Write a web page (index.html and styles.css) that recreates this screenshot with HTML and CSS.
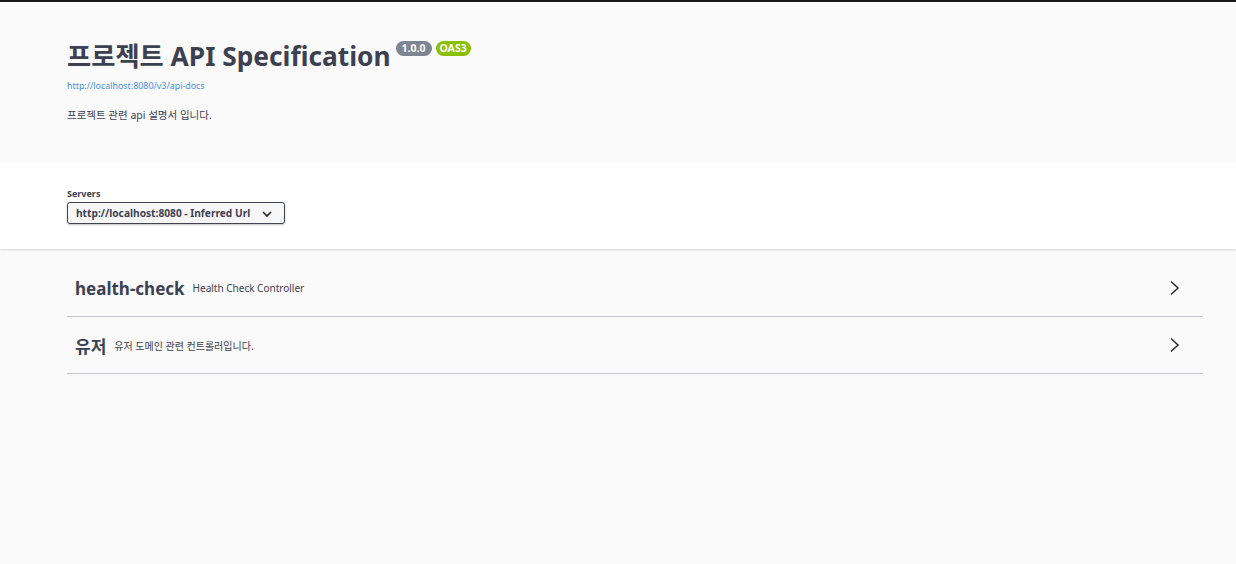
FILE: index.html
```html
<!DOCTYPE html>
<html lang="ko">
<head>
<meta charset="utf-8">
<title>Swagger UI</title>
<link rel="stylesheet" href="styles.css">
</head>
<body>
<div class="topline"></div>
<section class="info">
  <div class="wrap">
    <h2 class="title">프로젝트 API Specification<span class="badges"><span class="badge version">1.0.0</span><span class="badge oas">OAS3</span></span></h2>
    <a class="url" href="#">http://localhost:8080/v3/api-docs</a>
    <p class="desc">프로젝트 관련 api 설명서 입니다.</p>
  </div>
</section>
<section class="schemes">
  <div class="wrap">
    <div class="servers-label">Servers</div>
    <div class="select">
      <span>http://localhost:8080 - Inferred Url</span>
      <svg class="caret" width="10" height="6" viewBox="0 0 10 6"><path d="M1 1 L5 5 L9 1" fill="none" stroke="#222" stroke-width="1.6"/></svg>
    </div>
  </div>
</section>
<section class="tags">
  <div class="wrap">
    <div class="tag">
      <div class="tag-left"><span class="tag-name">health-check</span><span class="tag-desc">Health Check Controller</span></div>
      <svg class="arrow" width="12" height="16" viewBox="0 0 12 16"><path d="M2 1.5 L9 8 L2 14.5" fill="none" stroke="#333" stroke-width="1.6"/></svg>
    </div>
    <div class="tag">
      <div class="tag-left"><span class="tag-name">유저</span><span class="tag-desc">유저 도메인 관련 컨트롤러입니다.</span></div>
      <svg class="arrow" width="12" height="16" viewBox="0 0 12 16"><path d="M2 1.5 L9 8 L2 14.5" fill="none" stroke="#333" stroke-width="1.6"/></svg>
    </div>
  </div>
</section>
</body>
</html>
```
FILE: styles.css
```css
html, body {
  margin: 0;
  padding: 0;
  background: #fafafa;
  font-family: "Noto Sans", "Open Sans", "Noto Sans CJK KR", sans-serif;
  color: #3b4151;
}
.topline {
  height: 2px;
  background: #1b1b1b;
}
.wrap {
  padding: 0 33px 0 67px;
}
.info .wrap {
  padding-top: 36px;
  padding-bottom: 39px;
}
.title {
  margin: 0;
  font-size: 26.3px;
  font-weight: 700;
  line-height: 36px;
  color: #3b4151;
  display: flex;
  align-items: flex-start;
}
.badges {
  display: inline-flex;
  gap: 4px;
  margin-left: 5px;
  margin-top: 3px;
}
.badge {
  font-family: "Noto Sans", sans-serif;
  font-size: 10.5px;
  font-weight: 700;
  color: #fff;
  line-height: 15px;
  height: 15px;
  padding: 0 6px;
  border-radius: 8px;
}
.version { background: #7d8492; }
.oas { background: #89bf04; padding: 0 4px; }
.url {
  display: block;
  margin-top: 5px;
  font-size: 8.9px;
  line-height: 13px;
  color: #4990e2;
  text-decoration: none;
}
.desc {
  margin: 15px 0 0;
  font-size: 10.5px;
  line-height: 16px;
  color: #3b4151;
}
.schemes {
  background: #fff;
  box-shadow: 0 1px 2px rgba(0,0,0,.15);
}
.schemes .wrap {
  padding-top: 26px;
  padding-bottom: 25px;
}
.servers-label {
  font-size: 9px;
  font-weight: 700;
  line-height: 12px;
  color: #3b4151;
}
.select {
  margin-top: 2px;
  height: 20px;
  border: 1px solid #41444e;
  border-radius: 3px;
  background: #f7f7f7;
  box-shadow: 0 1px 2px rgba(0,0,0,.25);
  display: flex;
  align-items: center;
  justify-content: space-between;
  padding: 0 12px 0 8px;
  box-sizing: content-box;
  width: 196px;
  font-size: 10.2px;
  font-weight: 700;
  white-space: nowrap;
  color: #3b4151;
}
.caret { margin-top: 2px; }
.tags .wrap {
  padding-top: 16px;
}
.tag {
  height: 52px;
  box-sizing: border-box;
  border-bottom: 1px solid #c4c6cb;
  margin-bottom: 5px;
  display: flex;
  align-items: center;
  justify-content: space-between;
  padding: 0 22px 5px 8px;
}
.tag-left {
  display: flex;
  align-items: center;
}
.tag-name {
  font-size: 17px;
  font-weight: 700;
  color: #3b4151;
}
.tag-desc {
  margin-left: 8px;
  font-size: 10px;
  color: #3b4151;
}
```
